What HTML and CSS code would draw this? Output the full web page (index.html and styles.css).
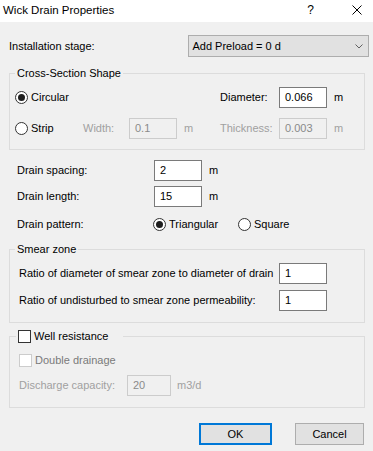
FILE: index.html
```html
<!DOCTYPE html>
<html>
<head>
<meta charset="utf-8">
<title>Wick Drain Properties</title>
<link rel="stylesheet" href="styles.css">
</head>
<body>
<div class="dialog">
  <div class="titlebar">
    <span class="title">Wick Drain Properties</span>
    <span class="help">?</span>
    <svg class="close" width="10" height="10" viewBox="0 0 10 10"><path d="M0.5 0.5 L9.5 9.5 M9.5 0.5 L0.5 9.5" stroke="#000" stroke-width="1" fill="none"/></svg>
  </div>
  <div class="content">
    <div class="install-row">
      <span class="install-label">Installation stage:</span>
      <div class="combo">
        <span class="combo-text">Add Preload = 0 d</span>
        <svg class="chev" width="8" height="5" viewBox="0 0 8 5"><path d="M0.5 0.5 L4 4 L7.5 0.5" stroke="#606060" stroke-width="1" fill="none"/></svg>
      </div>
    </div>

    <fieldset class="group group-cross">
      <legend class="legend">Cross-Section Shape</legend>
      <div class="cross-grid">
        <label class="radio"><span class="rb rb-on"></span>Circular</label>
        <span class="lbl col-dia">Diameter:</span>
        <span class="input">0.066</span>
        <span class="unit">m</span>

        <label class="radio"><span class="rb"></span>Strip</label>
        <span class="lbl dis">Width:</span>
        <span class="input input-dis">0.1</span>
        <span class="unit dis">m</span>
        <span class="lbl dis">Thickness:</span>
        <span class="input input-dis">0.003</span>
        <span class="unit dis">m</span>
      </div>
    </fieldset>

    <div class="drain-grid">
      <span class="lbl">Drain spacing:</span>
      <span class="input">2</span>
      <span class="unit">m</span>
      <span class="lbl">Drain length:</span>
      <span class="input">15</span>
      <span class="unit">m</span>
    </div>
    <div class="pattern-row">
      <span class="lbl pattern-label">Drain pattern:</span>
      <label class="radio radio-tri"><span class="rb rb-on"></span>Triangular</label>
      <label class="radio"><span class="rb"></span>Square</label>
    </div>

    <fieldset class="group group-smear">
      <legend class="legend">Smear zone</legend>
      <div class="smear-grid">
        <span class="lbl inner-lbl">Ratio of diameter of smear zone to diameter of drain</span>
        <span class="input">1</span>
        <span class="lbl inner-lbl">Ratio of undisturbed to smear zone permeability:</span>
        <span class="input">1</span>
      </div>
    </fieldset>

    <fieldset class="group group-well">
      <legend class="legend legend-well"><span class="cb"></span>Well resistance</legend>
      <div class="double-row">
        <span class="cb cb-dis"></span><span class="dis-dark">Double drainage</span>
      </div>
      <div class="discharge-row">
        <span class="lbl inner-lbl dis discharge-label">Discharge capacity:</span>
        <span class="input input-dis input-narrow">20</span>
        <span class="unit dis unit-wide">m3/d</span>
      </div>
    </fieldset>

    <div class="buttons">
      <span class="btn btn-ok">OK</span>
      <span class="btn btn-cancel">Cancel</span>
    </div>
  </div>
</div>
</body>
</html>
```

FILE: styles.css
```css
html, body {
  margin: 0;
  padding: 0;
}
body {
  background: #f0f0f0;
  font-family: "Liberation Sans", Arial, sans-serif;
  font-size: 11px;
  line-height: 15px;
  color: #000;
}
.dialog {
  width: 373px;
  height: 451px;
  overflow: hidden;
}
.titlebar {
  height: 22px;
  background: #fff;
  display: flex;
  align-items: center;
}
.title {
  flex: 1;
  padding-left: 3px;
  font-size: 11.5px;
  margin-top: -2px;
}
.help {
  font-size: 12px;
  margin-right: 38px;
  margin-top: -2px;
}
.close {
  margin-right: 11px;
  margin-top: -2px;
  display: block;
}
.content {
  padding: 0 4px 0 9px;
}
.install-row {
  margin-top: 13px;
  display: flex;
  align-items: center;
}
.install-label {
  width: 180px;
}
.combo {
  box-sizing: border-box;
  width: 181px;
  height: 22px;
  border: 1px solid #adadad;
  background: #e1e1e1;
  display: flex;
  align-items: center;
  padding: 0 5px 0 3px;
}
.combo-text {
  flex: 1;
}
.chev {
  display: block;
}
.group {
  margin: 0 4px 0 0;
  border: 1px solid #dcdcdc;
  padding: 6px 5px 10px 5px;
  min-width: 0;
}
.legend {
  padding: 0 2px;
  margin: 0;
  line-height: 15px;
  height: 15px;
}
.group-cross {
  margin-top: 9px;
}
.cross-grid {
  display: grid;
  grid-template-columns: 68px 46px 48px 43px 59px 48px auto;
  grid-template-rows: 21px 21px;
  row-gap: 10px;
  align-items: center;
}
.col-dia {
  grid-column: 5;
}
.radio {
  display: flex;
  align-items: center;
}
.rb {
  box-sizing: border-box;
  width: 13px;
  height: 13px;
  border: 1px solid #333;
  border-radius: 50%;
  background: #fff;
  margin-right: 3px;
  display: flex;
  align-items: center;
  justify-content: center;
  flex: none;
}
.rb-on::after {
  content: "";
  width: 7px;
  height: 7px;
  border-radius: 50%;
  background: #1e1e1e;
}
.lbl {
  white-space: nowrap;
}
.input {
  box-sizing: border-box;
  height: 21px;
  border: 1px solid #7a7a7a;
  background: #fff;
  padding-left: 5px;
  line-height: 19px;
}
.input-dis {
  border-color: #cccccc;
  background: #f0f0f0;
  color: #8a8a8a;
}
.unit {
  padding-left: 7px;
}
.dis {
  color: #a0a0a0;
}
.dis-dark {
  color: #7a7a7a;
}
.drain-grid {
  margin-top: 10px;
  padding-left: 8px;
  display: grid;
  grid-template-columns: 137px 48px auto;
  grid-template-rows: 21px 21px;
  row-gap: 5px;
  align-items: center;
}
.pattern-row {
  margin-top: 7px;
  padding-left: 8px;
  height: 21px;
  display: flex;
  align-items: center;
}
.pattern-label {
  width: 136px;
}
.radio-tri {
  width: 85px;
}
.group-smear {
  margin-top: 7px;
  padding-bottom: 11px;
}
.smear-grid {
  display: grid;
  grid-template-columns: 264px 48px;
  grid-template-rows: 21px 21px;
  row-gap: 6px;
  align-items: center;
}
.inner-lbl {
  padding-left: 4px;
}
.group-well {
  margin-top: 6px;
  padding-top: 8px;
  padding-bottom: 11px;
}
.legend-well {
  display: flex;
  align-items: center;
  padding: 0 15px 0 2px;
  margin-left: 1px;
}
.cb {
  box-sizing: border-box;
  width: 13px;
  height: 13px;
  border: 1px solid #333;
  background: #fff;
  margin-right: 3px;
  flex: none;
}
.cb-dis {
  border-color: #cccccc;
}
.double-row {
  height: 16px;
  display: flex;
  align-items: center;
  padding-left: 4px;
}
.discharge-row {
  margin-top: 7px;
  display: flex;
  align-items: center;
  height: 21px;
}
.discharge-label {
  width: 108px;
}
.input-narrow {
  width: 44px;
}
.unit-wide {
  padding-left: 6px;
}
.buttons {
  margin-top: 15px;
  display: flex;
  justify-content: flex-end;
  gap: 23px;
  padding-right: 5px;
}
.btn {
  box-sizing: border-box;
  height: 22px;
  background: #e1e1e1;
  border: 1px solid #adadad;
  display: flex;
  align-items: center;
  justify-content: center;
}
.btn-ok {
  width: 73px;
  border: 2px solid #0078d7;
}
.btn-cancel {
  width: 69px;
}
```
